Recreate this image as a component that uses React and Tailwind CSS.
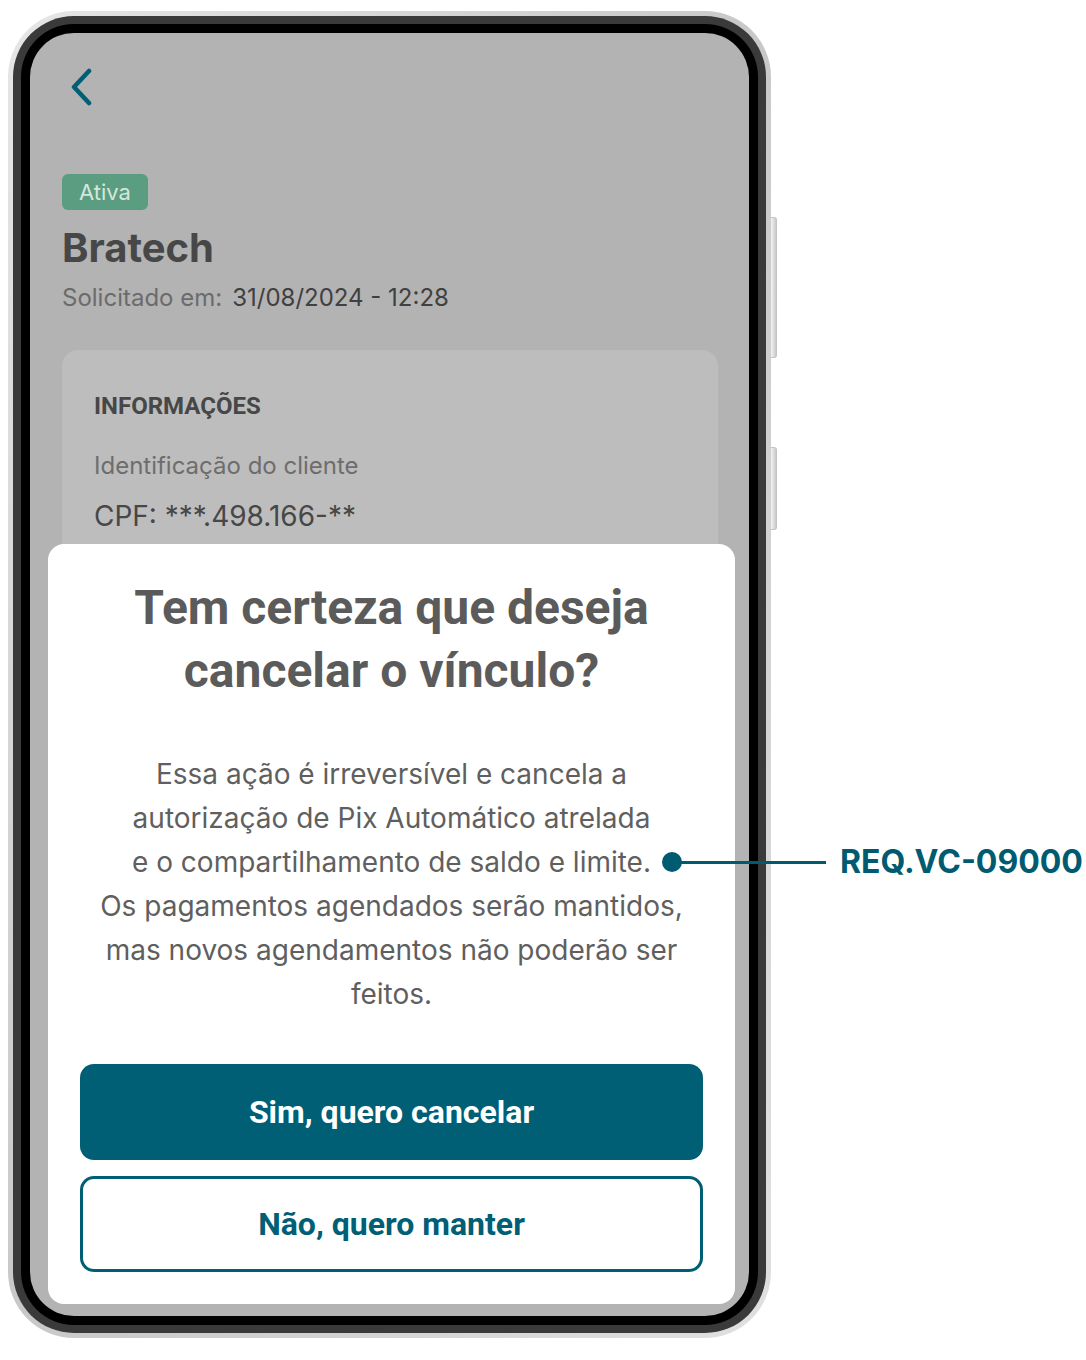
import { useState } from 'react';

const teal = '#005e75';

const BackChevron = () => (
  <svg width="26" height="38" viewBox="0 0 26 38" fill="none">
    <polyline
      points="19,3 4,19 19,35"
      stroke={teal}
      strokeWidth="4.5"
      strokeLinecap="round"
      strokeLinejoin="round"
    />
  </svg>
);

const SideButtons = () => (
  <div className="flex flex-col w-[7px] pt-[206px] gap-[89px]">
    <div className="h-[141px] w-[6px] rounded-r-[3px] bg-gradient-to-r from-[#f4f4f4] to-[#c9c9c9] border border-l-0 border-[#c4c4c4]" />
    <div className="h-[83px] w-[6px] rounded-r-[3px] bg-gradient-to-r from-[#f4f4f4] to-[#c9c9c9] border border-l-0 border-[#c4c4c4]" />
  </div>
);

const BodyText = () => {
  // line breaks follow the design exactly
  const lines = [
    'Essa ação é irreversível e cancela a',
    'autorização de Pix Automático atrelada',
    'e o compartilhamento de saldo e limite.',
    'Os pagamentos agendados serão mantidos,',
    'mas novos agendamentos não poderão ser',
    'feitos.',
  ];
  return (
    <p className="text-center text-[28px] leading-[44px] text-[#5f5f5f] font-['Inter',sans-serif]">
      {lines.map((line, i) => (
        <span key={i} className="block whitespace-nowrap">{line}</span>
      ))}
    </p>
  );
};

const ConfirmSheet = () => (
  <div className="absolute left-[18px] right-[14px] bottom-[12px] bg-white rounded-[16px] px-[32px] pt-[32px] pb-[32px]">
    <h2 className="text-center font-['Roboto',sans-serif] font-bold text-[48px] leading-[63px] text-[#5b5b5b]">
      Tem certeza que deseja
      <br />
      cancelar o vínculo?
    </h2>
    <div className="mt-[50px]">
      <BodyText />
    </div>
    <div className="mt-[48px] flex flex-col gap-[16px]">
      <button className="h-[96px] w-full rounded-[14px] bg-[#005e75] text-white font-['Roboto',sans-serif] font-bold text-[32px]">
        Sim, quero cancelar
      </button>
      <button className="h-[96px] w-full rounded-[14px] border-[3px] border-[#005e75] bg-white text-[#005e75] font-['Roboto',sans-serif] font-bold text-[32px]">
        Não, quero manter
      </button>
    </div>
  </div>
);

const Screen = () => (
  <div className="relative h-[1283px] w-[719px] rounded-[44px] bg-[#b3b3b3] overflow-hidden font-['Inter',sans-serif]">
    <div className="pl-[32px] pr-[31px] pt-[35px]">
      <div className="pl-[8px]">
        <BackChevron />
      </div>

      <div className="mt-[68px] inline-flex h-[36px] items-center rounded-[6px] bg-[#5a9d80] px-[17px] text-[22px] text-[#d6e6dc]">
        Ativa
      </div>

      <h1 className="mt-[15px] text-[40px] font-bold leading-[46px] text-[#474747]">Bratech</h1>

      <div className="mt-[11px] flex items-center gap-[10px] text-[24px] leading-[32px]">
        <span className="text-[#6b6b6b]">Solicitado em:</span>
        <span className="text-[#404040]">31/08/2024 - 12:28</span>
      </div>

      <div className="mt-[36px] h-[400px] rounded-[16px] bg-[#bdbdbd] px-[32px] pt-[41px]">
        <h3 className="font-['Roboto',sans-serif] text-[24px] font-bold leading-[30px] text-[#474747]">INFORMAÇÕES</h3>
        <p className="mt-[30px] text-[24px] leading-[30px] text-[#6d6d6d]">Identificação do cliente</p>
        <p className="mt-[18px] text-[28px] leading-[34px] text-[#474747]">CPF: ***.498.166-**</p>
      </div>
    </div>

    <ConfirmSheet />
  </div>
);

const PhoneFrame = () => (
  <div className="flex items-start">
    <div className="rounded-[66px] bg-gradient-to-br from-[#e6e6e6] via-[#c8c8c8] to-[#e0e0e0] p-[5px]">
      <div className="rounded-[61px] bg-[#3a3a3a] p-[8px]">
        <div className="rounded-[53px] bg-black p-[9px]">
          <Screen />
        </div>
      </div>
    </div>
    <SideButtons />
  </div>
);

const App = () => {
  const [req] = useState('REQ.VC-09000');

  return (
    <div className="relative h-[1360px] w-[1086px] bg-white pl-[8px] pt-[11px]">
      <PhoneFrame />

      {/* annotation marker over the body text */}
      <div className="absolute left-[662px] top-[852px] flex items-center">
        <div className="h-[20px] w-[20px] rounded-full bg-[#005b71]" />
        <div className="-ml-[2px] h-[3px] w-[146px] bg-[#005b71]" />
        <span className="ml-[14px] font-['Inter',sans-serif] text-[32px] font-bold leading-[20px] text-[#005b71]">
          {req}
        </span>
      </div>
    </div>
  );
};

export default App;
